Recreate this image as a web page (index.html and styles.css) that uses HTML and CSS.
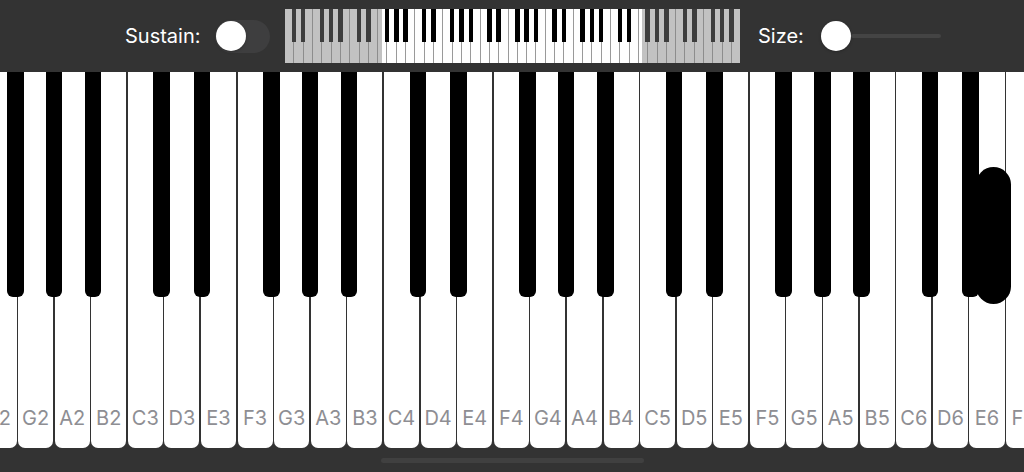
FILE: index.html
```html
<!DOCTYPE html>
<html lang="en">
<head>
<meta charset="utf-8">
<title>Piano</title>
<link rel="stylesheet" href="styles.css">
</head>
<body>
<header class="topbar">
  <span class="label label-sustain">Sustain:</span>
  <span class="switch"><span class="knob"></span></span>
  <div class="mini">
    <div class="mini-keys">
      <span class="mk"><i></i></span><span class="mk"><i></i></span><span class="mk"></span><span class="mk"><i></i></span><span class="mk"><i></i></span><span class="mk"><i></i></span><span class="mk"></span>
      <span class="mk"><i></i></span><span class="mk"><i></i></span><span class="mk"></span><span class="mk"><i></i></span><span class="mk"><i></i></span><span class="mk"><i></i></span><span class="mk"></span>
      <span class="mk"><i></i></span><span class="mk"><i></i></span><span class="mk"></span><span class="mk"><i></i></span><span class="mk"><i></i></span><span class="mk"><i></i></span><span class="mk"></span>
      <span class="mk"><i></i></span><span class="mk"><i></i></span><span class="mk"></span><span class="mk"><i></i></span><span class="mk"><i></i></span><span class="mk"><i></i></span><span class="mk"></span>
      <span class="mk"><i></i></span><span class="mk"><i></i></span><span class="mk"></span><span class="mk"><i></i></span><span class="mk"><i></i></span><span class="mk"><i></i></span><span class="mk"></span>
      <span class="mk"><i></i></span><span class="mk"><i></i></span><span class="mk"></span><span class="mk"><i></i></span><span class="mk"><i></i></span><span class="mk"><i></i></span><span class="mk"></span>
      <span class="mk"><i></i></span><span class="mk"><i></i></span><span class="mk"></span><span class="mk"><i></i></span><span class="mk"><i></i></span><span class="mk"><i></i></span><span class="mk"></span>
    </div>
    <span class="shade shade-left"></span>
    <span class="shade shade-right"></span>
  </div>
  <span class="label label-size">Size:</span>
  <span class="slider"><span class="slider-knob"></span><span class="slider-track"></span></span>
</header>

<main class="keyboard">
  <div class="whites">
    <div class="wk"><span class="bk bl"></span><span class="name">F2</span></div>
    <div class="wk"><span class="bk bc"></span><span class="name">G2</span></div>
    <div class="wk"><span class="bk br"></span><span class="name">A2</span></div>
    <div class="wk"><span class="name">B2</span></div>
    <div class="wk"><span class="bk bl"></span><span class="name">C3</span></div>
    <div class="wk"><span class="bk bd"></span><span class="name">D3</span></div>
    <div class="wk"><span class="name">E3</span></div>
    <div class="wk"><span class="bk bl"></span><span class="name">F3</span></div>
    <div class="wk"><span class="bk bc"></span><span class="name">G3</span></div>
    <div class="wk"><span class="bk br"></span><span class="name">A3</span></div>
    <div class="wk"><span class="name">B3</span></div>
    <div class="wk"><span class="bk bl"></span><span class="name">C4</span></div>
    <div class="wk"><span class="bk bd"></span><span class="name">D4</span></div>
    <div class="wk"><span class="name">E4</span></div>
    <div class="wk"><span class="bk bl"></span><span class="name">F4</span></div>
    <div class="wk"><span class="bk bc"></span><span class="name">G4</span></div>
    <div class="wk"><span class="bk br"></span><span class="name">A4</span></div>
    <div class="wk"><span class="name">B4</span></div>
    <div class="wk"><span class="bk bl"></span><span class="name">C5</span></div>
    <div class="wk"><span class="bk bd"></span><span class="name">D5</span></div>
    <div class="wk"><span class="name">E5</span></div>
    <div class="wk"><span class="bk bl"></span><span class="name">F5</span></div>
    <div class="wk"><span class="bk bc"></span><span class="name">G5</span></div>
    <div class="wk"><span class="bk br"></span><span class="name">A5</span></div>
    <div class="wk"><span class="name">B5</span></div>
    <div class="wk"><span class="bk bl"></span><span class="name">C6</span></div>
    <div class="wk"><span class="bk bd"></span><span class="name">D6</span></div>
    <div class="wk"><span class="name">E6</span></div>
    <div class="wk"><span class="bk bl"></span><span class="name">F6</span></div>
  </div>
  <span class="touch"></span>
</main>

<footer class="bottombar"><span class="home-indicator"></span></footer>
</body>
</html>
```
FILE: styles.css
```css
* { box-sizing: border-box; }

html, body {
  margin: 0;
  padding: 0;
  background: #333333;
  width: 1024px;
  height: 472px;
  overflow: hidden;
  font-family: "Inter", "Liberation Sans", sans-serif;
}

.topbar {
  height: 72px;
  display: flex;
  align-items: center;
  padding-left: 125px;
  background: #333333;
}

.label {
  color: #ffffff;
  font-size: 20px;
  line-height: 24px;
}

.label-sustain { width: 77px; }
.label-size { width: 45px; margin-left: 18px; }

.switch {
  margin-left: 13px;
  width: 55px;
  height: 33px;
  border-radius: 17px;
  background: #3e3e3f;
  display: flex;
  align-items: center;
  padding-left: 1px;
}

.knob {
  width: 30px;
  height: 30px;
  border-radius: 50%;
  background: #ffffff;
  box-shadow: 0 1px 3px rgba(0,0,0,0.25);
}

.mini {
  position: relative;
  margin-left: 15px;
  width: 455px;
  height: 54px;
  overflow: hidden;
}

.mini-keys {
  display: flex;
  gap: 1px;
  height: 100%;
  background: #9a9a9a;
}

.mk {
  position: relative;
  flex: 1 1 0;
  background: #ffffff;
}

.mk i {
  position: absolute;
  top: 0;
  right: -2.75px;
  width: 4.5px;
  height: 33px;
  background: #000000;
  z-index: 2;
}

.shade {
  position: absolute;
  top: 0;
  bottom: 0;
  background: rgba(128, 128, 128, 0.48);
  z-index: 3;
}

.shade-left { left: 0; width: 97px; }
.shade-right { left: 357px; right: 0; }

.slider {
  margin-left: 18px;
  display: flex;
  align-items: center;
  width: 120px;
}

.slider-knob {
  flex: 0 0 30px;
  height: 30px;
  border-radius: 50%;
  background: #ffffff;
  box-shadow: 0 1px 3px rgba(0,0,0,0.25);
}

.slider-track {
  flex: 1;
  height: 4px;
  border-radius: 2px;
  background: #444444;
}

.keyboard {
  position: relative;
  height: 376px;
  overflow: hidden;
  background: #333333;
}

.whites {
  display: flex;
  gap: 1.5px;
  height: 100%;
  margin-left: -18.6px;
}

.wk {
  position: relative;
  flex: 0 0 35.1px;
  height: 100%;
  background: #ffffff;
  border-radius: 0 0 7px 7px;
  display: flex;
  flex-direction: column;
  justify-content: flex-end;
  align-items: center;
  padding-bottom: 19px;
}

.name {
  color: #8e8e93;
  font-size: 20px;
  line-height: 22px;
  white-space: nowrap;
}

.bk {
  position: absolute;
  top: 0;
  width: 16.5px;
  height: 225px;
  background: #000000;
  border-radius: 0 0 6px 6px;
  z-index: 2;
}

.bl { right: -7px; }
.bc { right: -9px; }
.bd { right: -11px; }
.br { right: -11.5px; }

.touch {
  position: absolute;
  left: 976px;
  top: 95px;
  width: 35px;
  height: 137px;
  border-radius: 17.5px;
  background: #000000;
  z-index: 4;
}

.bottombar {
  height: 24px;
  display: flex;
  align-items: center;
  justify-content: center;
}

.home-indicator {
  width: 263px;
  height: 5px;
  border-radius: 3px;
  background: #404040;
}
```
